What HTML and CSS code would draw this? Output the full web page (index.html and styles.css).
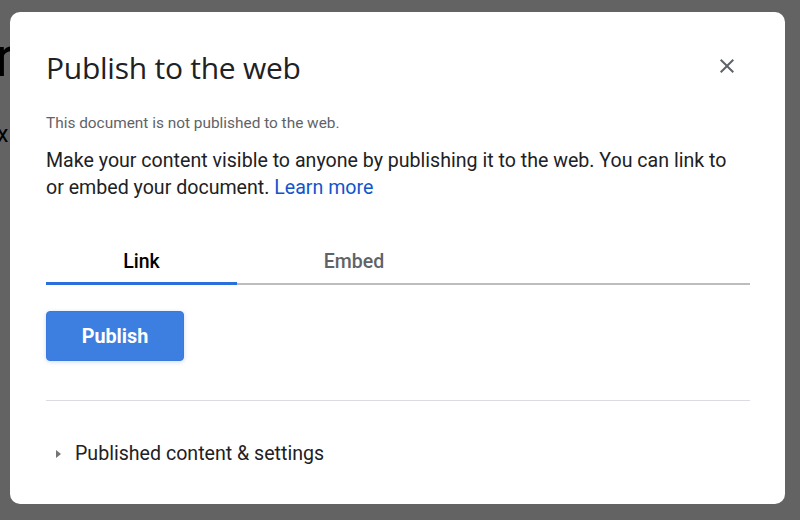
FILE: index.html
```html
<!DOCTYPE html>
<html lang="en">
<head>
<meta charset="utf-8">
<title>Publish to the web</title>
<link rel="stylesheet" href="styles.css">
</head>
<body>
<div class="page">
  <span class="bg-r">r</span>
  <span class="bg-x">x</span>
</div>
<div class="scrim">
  <div class="dialog">
    <div class="head">
      <h1 class="title">Publish to the web</h1>
      <button class="close" aria-label="Close">
        <svg width="24" height="24" viewBox="0 0 24 24"><path d="M19 6.41L17.59 5 12 10.59 6.41 5 5 6.41 10.59 12 5 17.590 6.41 19 12 13.41 17.59 19 19 17.59 13.41 12z" fill="#5f6368"/></svg>
      </button>
    </div>
    <p class="status">This document is not published to the web.</p>
    <p class="desc">Make your content visible to anyone by publishing it to the web. You can link to or embed your document. <a href="#" class="link">Learn more</a></p>
    <div class="tabs">
      <div class="tab active">Link</div>
      <div class="tab">Embed</div>
    </div>
    <div class="actions">
      <button class="publish">Publish</button>
    </div>
    <hr class="divider">
    <div class="settings">
      <span class="tri"></span>
      <span>Published content &amp; settings</span>
    </div>
  </div>
</div>
</body>
</html>
```

FILE: styles.css
```css
* { box-sizing: border-box; }
html, body { margin: 0; padding: 0; }
body {
  width: 800px;
  height: 520px;
  overflow: hidden;
  position: relative;
  background: #fff;
  font-family: Roboto, "Liberation Sans", Arial, sans-serif;
}
.page { position: absolute; inset: 0; }
.bg-r {
  position: absolute;
  left: -5px;
  top: 22px;
  font-size: 56px;
  line-height: 70px;
  color: #000;
  font-family: Roboto, sans-serif;
}
.bg-x {
  position: absolute;
  left: -3px;
  top: 120px;
  font-size: 23px;
  line-height: 30px;
  color: #000;
}
.scrim {
  position: absolute;
  inset: 0;
  background: rgba(0, 0, 0, 0.61);
  padding: 12px 15px 16px 10px;
}
.dialog {
  background: #fff;
  border-radius: 10px;
  width: 775px;
  height: 492px;
  padding: 36px 35px 0 36px;
  color: #202124;
}
.head {
  display: flex;
  justify-content: space-between;
  align-items: flex-start;
}
.title {
  margin: 0;
  font-family: "Open Sans", Roboto, sans-serif;
  font-weight: 400;
  font-size: 30px;
  line-height: 40px;
  letter-spacing: -0.25px;
  color: #202124;
}
.close {
  border: 0;
  background: none;
  padding: 0;
  width: 24px;
  height: 24px;
  margin: 6px 11px 0 0;
  cursor: pointer;
}
.close svg { display: block; }
.status {
  margin: 25px 0 0;
  font-size: 15.4px;
  line-height: 20px;
  color: #5f6368;
}
.desc {
  margin: 14px 0 0;
  max-width: 695px;
  font-size: 19.6px;
  line-height: 27px;
  color: #202124;
}
.link { color: #1155cc; text-decoration: none; }
.tabs {
  display: flex;
  margin-top: 47px;
  border-bottom: 2px solid #bdbdbd;
}
.tab {
  width: 191px;
  text-align: center;
  font-size: 19.5px;
  font-weight: 500;
  line-height: 28px;
  padding-bottom: 6px;
  color: #5f6368;
  margin-bottom: -2px;
  border-bottom: 3px solid transparent;
}
.tab + .tab { width: 234px; }
.tab.active { color: #000; border-bottom-color: #2a6fdc; }
.actions { padding-top: 26px; padding-bottom: 39px; }
.publish {
  width: 138px;
  height: 50px;
  border: 1px solid #3a7adf;
  border-radius: 4px;
  background: #3d7ee1;
  color: #fff;
  font-family: Roboto, sans-serif;
  font-size: 19.8px;
  font-weight: 700;
  box-shadow: 0 1px 4px rgba(60, 120, 220, 0.25);
}
.divider {
  margin: 0;
  border: 0;
  border-top: 1px solid #dadce0;
}
.settings {
  display: flex;
  align-items: center;
  gap: 14px;
  margin-top: 41px;
  padding-left: 10px;
  font-size: 19.6px;
  line-height: 24px;
  color: #202124;
}
.tri {
  width: 0;
  height: 0;
  border-top: 4.5px solid transparent;
  border-bottom: 4.5px solid transparent;
  border-left: 5px solid #757575;
}
```
